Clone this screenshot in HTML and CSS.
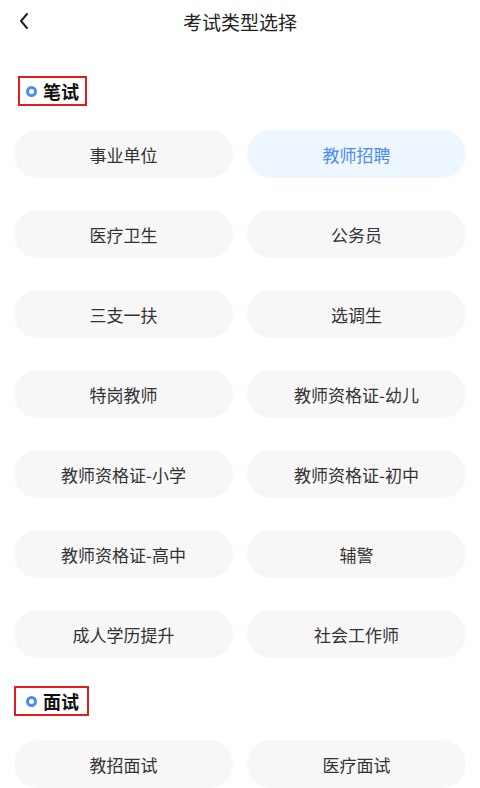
FILE: index.html
```html
<!DOCTYPE html>
<html lang="zh-CN">
  <head>
    <meta charset="UTF-8" />
    <meta name="viewport" content="width=device-width, initial-scale=1.0" />
    <title>考试类型选择</title>
    <link rel="stylesheet" href="styles.css">
  </head>
  <body>
    <header class="topbar">
      <button class="back" aria-label="返回">
        <svg width="12" height="18" viewBox="0 0 12 18">
          <path d="M9 2 L3 9 L9 16" fill="none" stroke="#222" stroke-width="2" stroke-linecap="round" stroke-linejoin="round" />
        </svg>
      </button>
      <h1 class="title">考试类型选择</h1>
      <span></span>
    </header>

    <main class="content">
      <div class="label">
        <span class="dot"></span>笔试
      </div>
      <div class="options">
        <button class="option">事业单位</button>
        <button class="option active">教师招聘</button>
        <button class="option">医疗卫生</button>
        <button class="option">公务员</button>
        <button class="option">三支一扶</button>
        <button class="option">选调生</button>
        <button class="option">特岗教师</button>
        <button class="option">教师资格证-幼儿</button>
        <button class="option">教师资格证-小学</button>
        <button class="option">教师资格证-初中</button>
        <button class="option">教师资格证-高中</button>
        <button class="option">辅警</button>
        <button class="option">成人学历提升</button>
        <button class="option">社会工作师</button>
      </div>

      <div class="label label-wide">
        <span class="dot"></span>面试
      </div>
      <div class="options">
        <button class="option">教招面试</button>
        <button class="option">医疗面试</button>
      </div>
    </main>
  </body>
</html>
```

FILE: styles.css
```css
body {
  margin: 0;
  font-family: "Noto Sans CJK SC", "Noto Sans", sans-serif;
  background-color: #ffffff;
  color: #333;
}

.topbar {
  height: 42px;
  display: grid;
  grid-template-columns: 48px 1fr 48px;
  align-items: center;
}

.back {
  border: none;
  background: none;
  padding: 0 0 0 18px;
  height: 42px;
  display: flex;
  align-items: center;
  cursor: pointer;
}

.title {
  margin: 0;
  text-align: center;
  font-size: 19px;
  font-weight: normal;
  color: #222;
}

.content {
  padding: 0 14px;
}

.label {
  display: inline-flex;
  align-items: center;
  gap: 6px;
  margin: 34px 0 0 4px;
  padding: 0 6px;
  height: 30px;
  box-sizing: border-box;
  border: 2px solid #e21d1d;
  font-size: 18px;
  font-weight: bold;
  color: #111;
}

.label-wide {
  margin: 28px 0 0 0;
  padding-left: 10px;
  width: 75px;
}

.dot {
  width: 11px;
  height: 11px;
  box-sizing: border-box;
  border: 3px solid #4a8cf7;
  border-radius: 50%;
}

.options {
  display: grid;
  grid-template-columns: 1fr 1fr;
  column-gap: 14px;
  row-gap: 32px;
  margin-top: 24px;
}

.option {
  height: 48px;
  border: none;
  border-radius: 24px;
  background-color: #f7f7f7;
  font-family: inherit;
  font-size: 17px;
  color: #333;
  cursor: pointer;
}

.option.active {
  background-color: #eef6ff;
  color: #4a8cf0;
}
```
